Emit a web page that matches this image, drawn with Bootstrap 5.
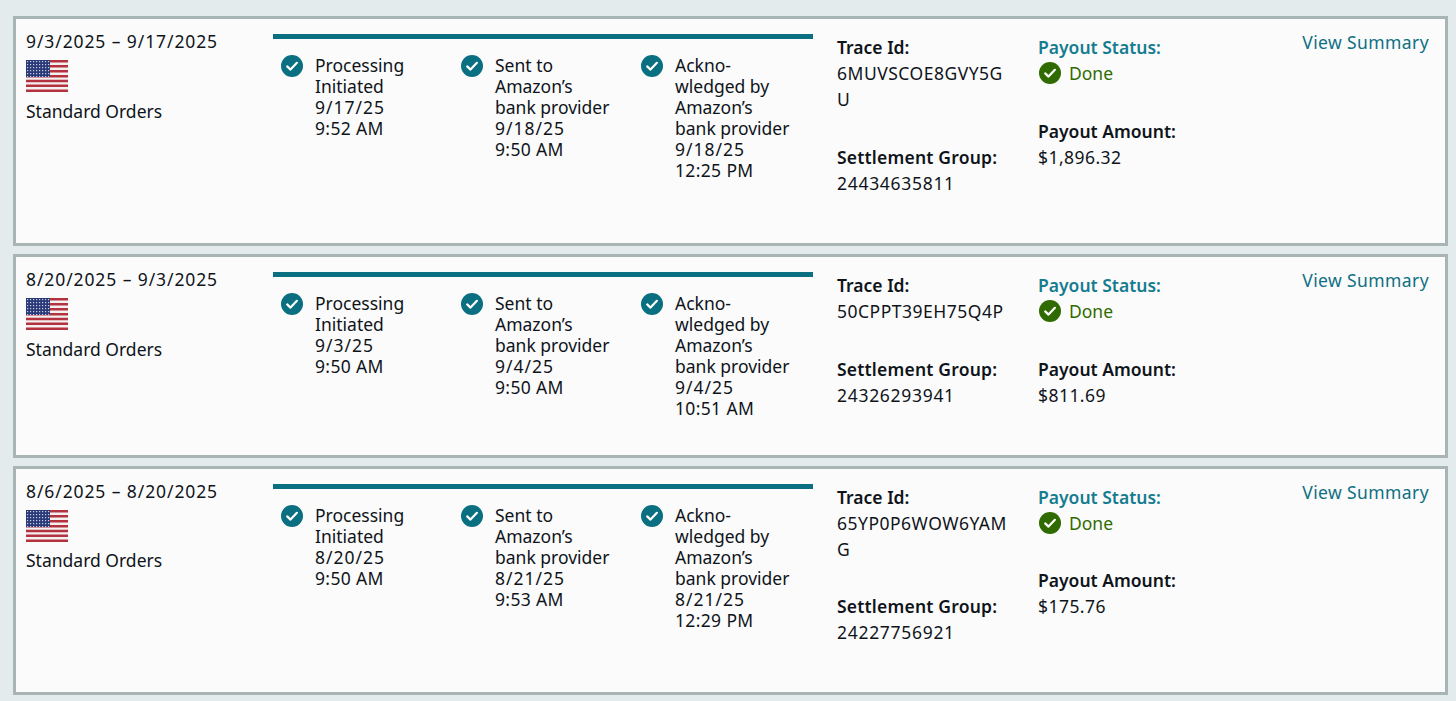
<!DOCTYPE html>
<html lang="en">
  <head>
    <meta charset="UTF-8" />
    <meta name="viewport" content="width=device-width, initial-scale=1.0" />
    <title>Payouts</title>
    <link href="https://cdn.jsdelivr.net/npm/bootstrap@5.3.2/dist/css/bootstrap.min.css" rel="stylesheet" />
    <style>
      body {
        background-color: #e3ebed;
        color: #0f141a;
        font-family: "Noto Sans", "Liberation Sans", sans-serif;
        font-size: 17.5px;
        line-height: 21px;
        padding: 16px 8px 0 13px;
        overflow: hidden;
      }
      .payout-card {
        background-color: #fbfbfb;
        border: 3px solid #a9b5b5;
        margin-bottom: 8px;
        padding: 10px 16px 0 10px;
      }
      .period-col {
        width: 247px;
        flex: none;
        padding-top: 2px;
      }
      .period-text {
        letter-spacing: 0.9px;
      }
      .period-col svg {
        display: block;
        margin: 8px 0 9px;
      }
      .steps-col {
        width: 540px;
        flex: none;
        margin-top: 5px;
        border-top: 5px solid #0a6f80;
      }
      .step-item {
        width: 180px;
        padding: 16px 0 0 8px;
        gap: 12px;
      }
      .step-item svg {
        flex: none;
        color: #0a6f80;
      }
      .step-date {
        letter-spacing: 1px;
      }
      .step-time {
        letter-spacing: 0.35px;
      }
      .info-col {
        line-height: 26px;
        flex: none;
        padding: 5px 0 47px;
      }
      .trace-col {
        width: 201px;
        margin-left: 24px;
      }
      .amount-col {
        width: 200px;
      }
      .info-gap {
        margin-top: 32px;
      }
      .info-label {
        font-weight: 600;
      }
      .group-label {
        letter-spacing: 0.2px;
      }
      .status-label {
        color: #167c90;
        font-weight: 600;
      }
      .status-done {
        color: #2f6b00;
        gap: 8px;
        padding-left: 1px;
      }
      .trace-text {
        letter-spacing: 0.5px;
      }
      .group-text {
        letter-spacing: 0.7px;
      }
      .amount-text {
        letter-spacing: 0.45px;
      }
      .summary-link {
        color: #0f7083;
        text-decoration: none;
        margin-left: auto;
        line-height: 26px;
        letter-spacing: 0.4px;
        white-space: nowrap;
        height: 26px;
      }
      /* third row sits a little tighter in the picture */
      .payout-tight .info-gap {
        margin-top: 30.5px;
      }
      .payout-tight .period-col svg {
        margin-bottom: 7.5px;
      }
    </style>
  </head>
  <body>
    <svg width="0" height="0" class="d-block">
      <defs>
        <pattern id="starDots" width="3" height="3" patternUnits="userSpaceOnUse">
          <rect width="3" height="3" fill="#2a3a78" />
          <rect x="1" y="1" width="1.2" height="1.2" fill="#c9cfe2" />
        </pattern>
        <symbol id="flagUs" viewBox="0 0 42 32">
          <rect width="42" height="32" fill="#f4f0f0" />
          <path d="M0 0h42v2.5H0zM0 5h42v2.5H0zM0 10h42v2.5H0zM0 15h42v2.5H0zM0 19.7h42v2.5H0zM0 24.6h42v2.5H0zM0 29.5h42V32H0z" fill="#b3323f" />
          <rect width="24" height="17" fill="url(#starDots)" />
        </symbol>
        <symbol id="checkDisc" viewBox="0 0 22 22">
          <circle cx="11" cy="11" r="11" fill="currentColor" />
          <path d="M6.2 11.4l3.3 3.2 6.4-6.8" fill="none" stroke="#fff" stroke-width="2.2" stroke-linecap="round" stroke-linejoin="round" />
        </symbol>
      </defs>
    </svg>

    <div id="payoutList"></div>

    <script>
      const payouts = [
        {
          period: "9/3/2025 – 9/17/2025",
          dates: [["9/17/25", "9:52 AM"], ["9/18/25", "9:50 AM"], ["9/18/25", "12:25 PM"]],
          trace: ["6MUVSCOE8GVY5G", "U"],
          group: "24434635811",
          amount: "$1,896.32",
        },
        {
          period: "8/20/2025 – 9/3/2025",
          dates: [["9/3/25", "9:50 AM"], ["9/4/25", "9:50 AM"], ["9/4/25", "10:51 AM"]],
          trace: ["50CPPT39EH75Q4P"],
          group: "24326293941",
          amount: "$811.69",
        },
        {
          period: "8/6/2025 – 8/20/2025",
          dates: [["8/20/25", "9:50 AM"], ["8/21/25", "9:53 AM"], ["8/21/25", "12:29 PM"]],
          trace: ["65YP0P6WOW6YAM", "G"],
          group: "24227756921",
          amount: "$175.76",
          tight: true,
        },
      ];

      const stepNames = [
        ["Processing", "Initiated"],
        ["Sent to", "Amazon’s", "bank provider"],
        ["Ackno-", "wledged by", "Amazon’s", "bank provider"],
      ];

      function renderPayouts() {
        document.getElementById("payoutList").innerHTML = payouts
          .map((p) => {
            const steps = stepNames
              .map((name, i) => `
                <div class="step-item d-flex">
                  <svg width="22" height="22"><use href="#checkDisc" /></svg>
                  <div>
                    ${name.join("<br />")}<br />
                    <span class="step-date">${p.dates[i][0]}</span><br />
                    <span class="step-time">${p.dates[i][1]}</span>
                  </div>
                </div>`)
              .join("");
            return `
              <div class="payout-card d-flex align-items-start ${p.tight ? "payout-tight" : ""}">
                <div class="period-col">
                  <div class="period-text">${p.period}</div>
                  <svg width="42" height="32"><use href="#flagUs" /></svg>
                  <div>Standard Orders</div>
                </div>
                <div class="steps-col d-flex">${steps}</div>
                <div class="info-col trace-col">
                  <div class="info-label">Trace Id:</div>
                  <div class="trace-text">${p.trace.join("<br />")}</div>
                  <div class="info-label group-label info-gap">Settlement Group:</div>
                  <div class="group-text">${p.group}</div>
                </div>
                <div class="info-col amount-col">
                  <div class="status-label">Payout Status:</div>
                  <div class="status-done d-flex align-items-center">
                    <svg width="22" height="22"><use href="#checkDisc" /></svg>Done
                  </div>
                  <div class="info-label info-gap">Payout Amount:</div>
                  <div class="amount-text">${p.amount}</div>
                </div>
                <a href="#" class="summary-link">View Summary</a>
              </div>`;
          })
          .join("");
      }

      renderPayouts();
    </script>
  </body>
</html>
